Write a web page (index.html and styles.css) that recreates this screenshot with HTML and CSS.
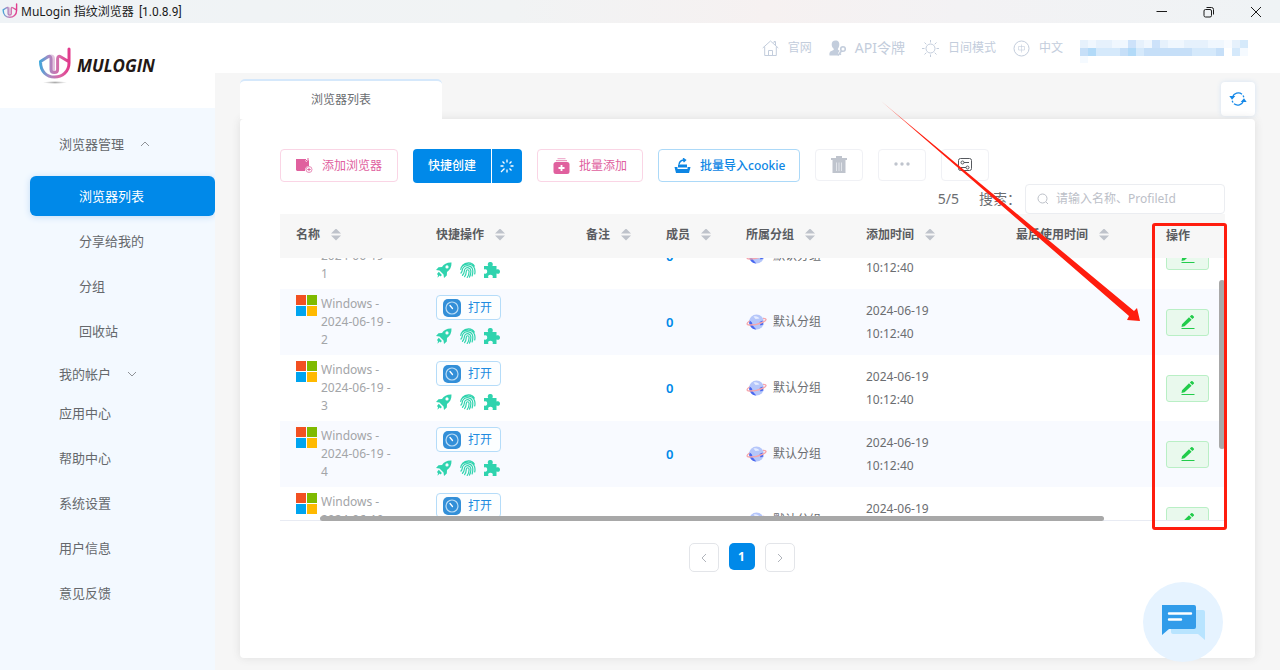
FILE: index.html
```html
<!DOCTYPE html>
<html lang="zh-CN">
<head>
<meta charset="utf-8">
<title>MuLogin 指纹浏览器</title>
<link rel="stylesheet" href="styles.css">
</head>
<body>
<svg class="defs" aria-hidden="true">
  <defs>
    <linearGradient id="brand" gradientUnits="userSpaceOnUse" x1="1" x2="32" y1="0" y2="0"><stop offset="0" stop-color="#35a8dc"/><stop offset=".3" stop-color="#a58cc4"/><stop offset=".65" stop-color="#d96aa8"/><stop offset="1" stop-color="#e2368a"/></linearGradient>
    <symbol id="mark" viewBox="0 0 34 38">
      <g fill="none" stroke="url(#brand)" stroke-linecap="round" stroke-linejoin="round">
        <path stroke-width="3" d="M31 2V16C31 25 24 30 16.500 30S2.500 25 2.500 14.500L9.500 10Q13 8 13 12V22.500Q13 25.500 16.300 25.500T19.600 22.500V12Q19.600 8 23 10L30.500 14.500"/>
        <path stroke-width="3" opacity=".45" d="M9.500 10Q15.500 7.500 15.500 12V23"/>
      </g>
    </symbol>
    <symbol id="windows" viewBox="0 0 20 20"><path fill="#f25022" d="M0 0h9.500v9.500H0z"/><path fill="#7fba00" d="M10.500 0H20v9.500h-9.500z"/><path fill="#00a4ef" d="M0 10.500h9.500V20H0z"/><path fill="#ffb900" d="M10.500 10.500H20V20h-9.500z"/></symbol>
    <symbol id="browser" viewBox="0 0 18 18"><rect width="18" height="18" rx="5" fill="#338fd8"/><circle cx="9" cy="9" r="6" fill="none" stroke="#b9dcf5" stroke-width="1.200"/><path d="M7 6.500l2.500 3" stroke="#fff" stroke-width="1.300" stroke-linecap="round"/></symbol>
    <symbol id="rocket" viewBox="0 0 16 16"><path fill="#2fd3ae" d="M15.500.5C11 .3 8 2 6 5L2.500 5.200 0 8l3.500.5L7.500 12.500 8 16l2.800-2.500L11 10C14 8 15.700 5 15.500.5zM11 6.500A1.600 1.600 0 1 1 11 3.300 1.600 1.600 0 0 1 11 6.500z"/><path fill="#2fd3ae" d="M2.800 9.800L5.900 12.900 4.600 14.500 3.700 13.600 1.500 15.700 2 13.200 1 12z"/></symbol>
    <symbol id="finger" viewBox="0 0 16 16"><g fill="none" stroke="#2fd3ae" stroke-width="1.200" stroke-linecap="round"><path d="M2.500 3.500C6-.5 12 0 14.300 4M.7 7.500C1.500 1.500 12-.5 14.500 6.500c.6 2 .6 4 .2 5.500M1 11c1.600-1.500 1-3.500 2-5 2.500-4 9-2.500 9.700 2 .3 2 0 4-.6 6M2.500 13.300C5 11 3.800 8.500 5 7c2-2.500 5.500-1 5.800 1.600.3 2.500-.4 4.700-1.300 6.500M4.600 14.600C6.300 13 6.200 10.500 6.300 9c.2-1.700 2.500-1.600 2.700 0 .2 2.500-.6 5-1.800 6.500"/></g></symbol>
    <symbol id="puzzle" viewBox="0 0 16 16"><path fill="#2fd3ae" d="M0 4h4.200C3 1.500 4.500 0 6.300 0s3.300 1.500 2.100 4H12.500v3.600C14.500 6.500 16 7.600 16 9.500s-1.500 3-3.500 1.900V16H8.600c.8-2.200-.4-3.300-2.200-3.300S3.600 13.800 4.400 16H0v-4.600c2.200.8 3.200-.2 3.200-1.900S2.200 6.800 0 7.600z"/></symbol>
    <symbol id="planet" viewBox="0 0 20 16"><circle cx="10" cy="8" r="7.500" fill="#b5c6fa"/><path d="M2.800 6.500c2 .5 3.500 2.500 3 4.500l4 4.400C5 15.600 2 11 2.800 6.500zM13 8l3-1.500.8 4-2.800 1z" fill="#4968f0"/><path d="M7 2.500c3-1 5 .5 6 2L9 5z" fill="#e7edff"/><path d="M3 7C0 9-.5 11 3 11c5 0 10-1.200 14-3.200 3.500-1.800 3.500-3.500-.5-3.300" fill="none" stroke="#f6a5ac" stroke-width="1.300"/></symbol>
    <symbol id="pen" viewBox="0 0 14 14"><path fill="#22cc4b" d="M1 9.200L8 2.200l2.600 2.600-7 6.400L.5 12zM8.800 1.500L10.200.2q.7-.5 1.300 0l1.300 1.300q.5.700 0 1.300L11.300 4z"/><path fill="#22cc4b" d="M.5 13h13v1H.5z"/></symbol>
  </defs>
</svg>

<header class="titlebar">
  <svg class="titlebar-mark"><use href="#mark"/></svg>
  <span class="titlebar-text">MuLogin 指纹浏览器</span><span class="version">[1.0.8.9]</span>
  <div class="window-buttons">
    <button aria-label="最小化"><svg viewBox="0 0 12 12"><path d="M.5 5.500h10.500"/></svg></button>
    <button aria-label="还原"><svg viewBox="0 0 12 12"><rect x="1" y="3.500" width="7.500" height="7.500" rx="1.500"/><path d="M3.500 1.500H8.500Q10.500 1.500 10.500 3.500V8.500"/></svg></button>
    <button aria-label="关闭"><svg viewBox="0 0 12 12"><path d="M1 1l10 10M11 1L1 11"/></svg></button>
  </div>
</header>

<div class="app">
  <aside class="sidebar">
    <div class="logo"><div class="logo-mark"><svg><use href="#mark"/></svg></div><span class="logo-text">MULOGIN</span></div>
    <nav class="menu">
      <button class="menu-title">浏览器管理<svg viewBox="0 0 10 6"><path d="M1 5l4-4 4 4"/></svg></button>
      <a class="menu-sub active" href="#list">浏览器列表</a>
      <a class="menu-sub" href="#share">分享给我的</a>
      <a class="menu-sub" href="#group">分组</a>
      <a class="menu-sub" href="#trash">回收站</a>
      <button class="menu-title compact">我的帐户<svg viewBox="0 0 10 6"><path d="M1 1l4 4 4-4"/></svg></button>
      <a class="menu-item" href="#apps">应用中心</a>
      <a class="menu-item" href="#help">帮助中心</a>
      <a class="menu-item" href="#settings">系统设置</a>
      <a class="menu-item" href="#user">用户信息</a>
      <a class="menu-item" href="#feedback">意见反馈</a>
    </nav>
  </aside>

  <div class="content">
    <nav class="topnav">
      <a href="#site"><svg viewBox="0 0 17 17"><path d="M.7 8L8.500 1l7.800 7M2.700 6.500V15.500H14.300V6.500M6.500 15.500V10.500h4v5M12 3V1.500h1.500V5"/></svg>官网</a>
      <a href="#api" class="api"><svg viewBox="0 0 17 17"><path class="solid" d="M6.500.5C9.500.5 10.500 2.500 10.300 5c-.2 2-1 3-1.500 4 .2 1 1 1.300 2 1.700C9 12.500 8.500 14 9.300 15.500H.5C0 11.500 1.500 11.500 4.500 10c.5-.5.300-1 0-1.500C3.500 7.500 2.700 6.500 2.700 4.500 2.700 2 4 .5 6.500.5z"/><circle cx="14" cy="9" r="2.300" stroke-width="1.600"/><path d="M12.500 11l-3.500 4.500M10.500 13.500l1.500 1.200" stroke-width="1.600"/></svg>API令牌</a>
      <a href="#mode"><svg viewBox="0 0 17 17"><circle cx="8.500" cy="8.500" r="4.500"/><path d="M8.500 0v2.500M8.500 14.500V17M0 8.500h2.500M14.500 8.500H17M2.500 2.500l1.800 1.800M12.700 12.700l1.800 1.800M2.500 14.500l1.800-1.800M12.700 4.300l1.800-1.800"/></svg>日间模式</a>
      <a href="#lang"><svg viewBox="0 0 17 17"><circle cx="8.500" cy="8.500" r="7.500"/><path d="M5.500 6.500h6v3.500h-6zM8.500 4.500v8" opacity=".6"/></svg>中文</a>
      <svg class="account" viewBox="0 0 168 24" role="img" aria-label="帐户">
        <path fill="#e6f1fc" d="M0 1h168v8H0z"/><path fill="#f0f7fe" d="M8 1h8v8H8zM32 1h16v8H32zM64 1h8v8h-8zM88 1h16v8H88zM128 1h16v8h-16z"/>
        <path fill="#cde2fa" d="M48 1h8v8h-8zM72 1h8v8h-8z"/><path fill="#f8fbff" d="M144 1h8v8h-8z"/><path fill="#d6eafb" d="M160 1h8v8h-8z"/>
        <path fill="#c6dff8" d="M0 9h144v8H0z"/><path fill="#b2daf8" d="M8 9h8v8H8zM48 9h8v8h-8z"/><path fill="#d5e9fb" d="M16 9h24v8H16zM56 9h8v8h-8zM112 9h24v8h-24z"/><path fill="#d5e9fb" d="M152 9h8v8h-8z"/><path fill="#f5faff" d="M160 9h8v8h-8zM0 17h8v7H0z"/>
      </svg>
    </nav>

    <main class="main">
      <div class="tabs">
        <button class="tab">浏览器列表</button>
        <button class="refresh" aria-label="刷新"><svg viewBox="0 0 18 16"><path d="M3.500 6A6.200 6.200 0 0 1 13 3.200M14.500 10A6.200 6.200 0 0 1 5 12.800"/><path d="M14 4.500l1.200 2.500M4 11.500L2.800 9" stroke-dasharray="2 1"/><path class="solid" d="M.3 5h6L3 8.800zM17.700 11h-6L15 7.200z"/></svg></button>
      </div>
      <section class="panel">
        <div class="toolbar">
          <button class="btn pink"><svg viewBox="0 0 17 16"><path class="solid" d="M0 1h9l1 3 3-2v6q-4 0-4 5H1L0 12z"/><path d="M9 1l3 3V0" stroke-width="1"/><circle cx="13" cy="11.500" r="3" stroke-width=".7"/><path d="M13 9.800v3.400M11.300 11.500h3.400" stroke-width="1"/></svg>添加浏览器</button>
          <div class="split"><button>快捷创建</button><button aria-label="批量生成"><svg viewBox="0 0 14 14"><path d="M7 .5v3M7 10.500v3M.5 7h3M10.500 7h3M2.500 2.500l2 2M9.500 9.500l2 2M9.500 4.500l2-2M1 13l3.500-3.500"/></svg></button></div>
          <button class="btn pink"><svg viewBox="0 0 16 16"><path d="M4 .700h8" opacity=".6"/><path d="M2.500 2.700h11" opacity=".8"/><rect class="solid" y="4" width="16" height="12" rx="2.500"/><path d="M8 7v6M5 10h6" stroke="#fff" stroke-width="1.800"/></svg>批量添加</button>
          <button class="btn blue"><svg viewBox="0 0 16 16"><path class="solid" d="M0 9h3v2h10V9h3l-1.500 6h-13zM3.500 6.500h9v3h-9z"/><path d="M4.500 6.500c.5-3.500 2.500-4.500 5.500-4.500M8.500.300L11 2 9 4" stroke-width="1.400"/></svg>批量导入cookie</button>
          <button class="btn icon" aria-label="删除"><svg viewBox="0 0 16 18"><path class="solid" d="M5 0h6v2h5v2H0V2h5zM1.500 4h13v13h-13z"/><path d="M5.500 6.500V15M8 6.500V15M10.500 6.500V15" stroke="#e2e5ea" stroke-width="1"/></svg></button>
          <button class="btn icon" aria-label="更多"><svg viewBox="0 0 18 18"><g class="solid"><circle cx="3" cy="8" r="1.700"/><circle cx="9" cy="8" r="1.700"/><circle cx="15" cy="8" r="1.700"/></g></svg></button>
          <button class="btn icon dark" aria-label="列设置"><svg viewBox="0 0 16 16"><rect x="1.500" y="1.500" width="13" height="12" rx="2"/><circle cx="5.500" cy="5.500" r="1.500"/><path d="M7 5.500h5M4 10.500h5"/><circle cx="10.500" cy="10.500" r="1.500"/></svg></button>
        </div>
        <div class="search-row">
          <span>5/5</span>
          <label for="search">搜索：</label>
          <div class="search-box"><svg viewBox="0 0 12 12"><circle cx="5.500" cy="5.500" r="4.500"/><path d="M9 9l2 2"/></svg><input id="search" type="search" placeholder="请输入名称、ProfileId"></div>
        </div>

        <div class="grid">
          <table class="head">
            <colgroup><col class="c-name"><col class="c-quick"><col class="c-note"><col class="c-note"><col class="c-group"><col class="c-time"><col><col class="c-act"></colgroup>
            <thead><tr><th>名称<i></i></th><th>快捷操作<i></i></th><th>备注<i></i></th><th>成员<i></i></th><th>所属分组<i></i></th><th>添加时间<i></i></th><th>最后使用时间<i></i></th><th class="act-head">操作</th></tr></thead>
          </table>
          <div class="body">
            <table class="rows">
              <colgroup><col class="c-name"><col class="c-quick"><col class="c-note"><col class="c-note"><col class="c-group"><col class="c-time"><col><col class="c-act"></colgroup>
              <tbody id="rows"></tbody>
            </table>
          </div>
          <div class="thumb-x"></div>
          <div class="thumb-y"></div>
          <div class="marker"></div>
          <svg class="arrow" viewBox="0 0 260 222"><defs><linearGradient id="fade" x1="0" y1="0" x2="1" y2="1"><stop offset="0" stop-color="#ff1d0e" stop-opacity=".4"/><stop offset=".15" stop-color="#ff1d0e"/></linearGradient></defs><path fill="url(#fade)" d="M0 0L253 210 256 207 259 220 246 219 248 215z"/></svg>
        </div>

        <nav class="pager" aria-label="分页">
          <button aria-label="上一页"><svg viewBox="0 0 6 10"><path d="M5 1L1 5l4 4"/></svg></button>
          <button class="current">1</button>
          <button aria-label="下一页"><svg viewBox="0 0 6 10"><path d="M1 1l4 4-4 4"/></svg></button>
        </nav>
      </section>
    </main>
  </div>
</div>
<button class="chat" aria-label="在线客服"><svg viewBox="0 0 44 36"><path fill="#b8e4ff" d="M10 6h32q2 0 2 2v28l-7-6H12q-2 0-2-2z"/><path fill="#319cea" d="M1 1h32q2 0 2 2v20q0 2-2 2H8L1 31z"/><path d="M8 9.500h22M8 15.500h12" stroke="#fff" stroke-width="2.400" stroke-linecap="round"/></svg></button>
<script src="rows.js"></script>
</body>
</html>
```

FILE: rows.js
```js
document.getElementById("rows").innerHTML = [1, 2, 3, 4, 5].map(n => `
  <tr>
    <td><div class="name"><svg><use href="#windows"/></svg><span>Windows - 2024-06-19 - ${n}</span></div></td>
    <td><div class="quick"><button class="open"><svg><use href="#browser"/></svg>打开</button>
      <div class="tools"><button aria-label="启动"><svg><use href="#rocket"/></svg></button><button aria-label="指纹"><svg><use href="#finger"/></svg></button><button aria-label="扩展"><svg><use href="#puzzle"/></svg></button></div></div></td>
    <td></td>
    <td><a class="members" href="#members">0</a></td>
    <td><div class="group"><svg><use href="#planet"/></svg>默认分组</div></td>
    <td><div class="time">2024-06-19<br>10:12:40</div></td>
    <td></td>
    <td><button class="edit" aria-label="编辑"><svg><use href="#pen"/></svg></button></td>
  </tr>`).join("");
```

FILE: styles.css
```css
* { box-sizing: border-box; }
body {
  margin: 0;
  height: 100vh;
  display: flex;
  flex-direction: column;
  overflow: hidden;
  background: #fff;
  color: #6b6d71;
  font: 12px/18px "Noto Sans", "Noto Sans CJK SC", sans-serif;
}
button { padding: 0; border: 0; background: none; color: inherit; font: inherit; cursor: pointer; }
a { color: inherit; text-decoration: none; }
svg { display: block; flex: none; fill: none; stroke: currentColor; }
symbol, use, .logo svg, .titlebar-mark { stroke: none; }
.solid { fill: currentColor; stroke: none; }
.defs { position: absolute; width: 0; height: 0; }

.titlebar {
  height: 23px;
  flex: none;
  display: flex;
  align-items: center;
  padding: 0 1px 0 2px;
  background: linear-gradient(90deg, #eff3f6 0%, #f1f3f4 40%, #f6f1f1 60%, #f3f2f4 75%, #eff3f5 100%);
  color: #1b1b1b;
}
.titlebar-mark { width: 16px; height: 18px; margin-right: 3px; }
.version { margin-left: 5px; font-family: Roboto, sans-serif; }
.window-buttons { margin-left: auto; display: flex; }
.window-buttons button { width: 47px; height: 23px; display: grid; place-items: center; }
.window-buttons svg { width: 12px; height: 12px; }

.app { flex: 1; min-height: 0; display: flex; }
.sidebar { width: 215px; flex: none; display: flex; flex-direction: column; }
.logo { height: 85px; display: flex; align-items: center; gap: 5px; padding-left: 38px; }
.logo-mark { display: flex; flex-direction: column; align-items: center; }
.logo-mark svg { width: 34px; height: 38px; }
.logo-mark::after { content: ""; width: 24px; height: 3px; margin-top: -4px; border-radius: 50%; background: radial-gradient(closest-side, #aaa, #fff); }
.logo-text { color: #231815; font: italic 700 17px/20px "Open Sans", sans-serif; }
.menu { flex: 1; display: flex; flex-direction: column; padding: 14px 0 0 30px; background: #f3f9ff; font-size: 13px; color: #65686c; }
.menu-title { height: 44px; display: flex; align-items: center; gap: 16px; padding-left: 29px; margin-bottom: 10px; }
.menu-title.compact { height: 32px; margin: 5px 0 0; }
.menu-title svg { width: 10px; height: 6px; stroke: #8f9398; }
.menu-sub, .menu-item { height: 45px; display: flex; align-items: center; padding-left: 49px; }
.menu-item { padding-left: 29px; }
.menu-sub.active { height: 40px; margin-bottom: 2px; border-radius: 6px; background: #0089e9; color: #fff; box-shadow: 0 1px 7px #c2dcf5; }

.content { flex: 1; min-width: 0; display: flex; flex-direction: column; }
.topnav { height: 50px; flex: none; display: flex; align-items: center; justify-content: flex-end; gap: 17px; padding-right: 32px; color: #c3cddc; }
.topnav a { display: flex; align-items: center; gap: 9px; }
.topnav a svg { width: 17px; height: 17px; }
.topnav .api { font-size: 14px; }
.account { width: 168px; height: 24px; margin-top: 6px; stroke: none; }

.main { flex: 1; min-height: 0; display: flex; flex-direction: column; padding: 6px 25px 12px; background: #f6f6f6; }
.tabs { display: flex; justify-content: space-between; align-items: flex-start; height: 40px; flex: none; }
.tab { width: 202px; height: 40px; position: relative; z-index: 1; border-top: 2px solid #d5e8fb; border-radius: 5px 5px 0 0; background: #fff; }
.refresh { width: 34px; height: 34px; margin-top: 3px; display: grid; place-items: center; border-radius: 4px; background: #fff; color: #1488e8; box-shadow: 0 0 5px #d5e3f2; }
.refresh svg { width: 18px; height: 16px; stroke-width: 1.3; }
.panel { flex: 1; padding: 30px 30px 0 40px; border-radius: 4px; background: #fff; box-shadow: 0 0 8px #dedede; }

.toolbar { display: flex; gap: 15px; height: 34px; align-items: flex-start; }
.btn { height: 33px; display: flex; align-items: center; gap: 9px; padding: 0 15px; border: 1px solid; border-radius: 4px; }
.btn svg { width: 17px; height: 16px; }
.btn.pink { border-color: #fad5e5; color: #e0609e; }
.btn.blue { padding-right: 14px; border-color: #acd9f8; color: #0d86e4; font-weight: 500; }
.btn.icon { width: 48px; height: 32px; padding: 0; justify-content: center; border-color: #f0f1f5; color: #bfc4cd; }
.btn.icon svg { width: 18px; height: 18px; }
.btn.icon.dark { color: #56595e; }
.btn.icon.dark svg { width: 16px; height: 16px; }
.split { display: flex; gap: 1px; height: 34px; color: #fff; font-weight: 500; }
.split button { width: 78px; background: #0089e9; border-radius: 4px 0 0 4px; }
.split button + button { width: 30px; display: grid; place-items: center; border-radius: 0 4px 4px 0; }
.split svg { width: 14px; height: 14px; stroke-width: 1.3; }

.search-row { height: 31px; display: flex; align-items: center; justify-content: flex-end; font-size: 14px; }
.search-row label { margin: 0 4px 0 20px; }
.search-box { width: 200px; height: 30px; display: flex; align-items: center; gap: 7px; padding: 0 11px; border: 1px solid #ebedf1; border-radius: 4px; color: #bcc0c8; }
.search-box svg { width: 12px; height: 12px; }
.search-box input { flex: 1; min-width: 0; padding: 0; border: 0; outline: 0; background: none; color: #606266; font: 12px/18px "Noto Sans", "Noto Sans CJK SC", sans-serif; }
.search-box input::placeholder { color: #bcc0c8; }

.grid { position: relative; border-bottom: 1px solid #e8ebf3; }
table { width: 100%; table-layout: fixed; border-collapse: collapse; }
.c-name { width: 140px; }
.c-quick, .c-time { width: 150px; }
.c-note { width: 80px; }
.c-group { width: 120px; }
.c-act { width: 75px; }
th { height: 44px; padding: 0 0 3px 16px; background: #f7f7f7; color: #5a5c60; text-align: left; font-weight: 700; white-space: nowrap; }
th.act-head { padding-bottom: 0; }
th i { display: inline-block; width: 10px; height: 12px; margin-left: 11px; vertical-align: -2px; background: #bfc3cb; clip-path: polygon(50% 0, 100% 5px, 0 5px, 50% 0, 50% 12px, 0 7px, 100% 7px, 50% 12px); }
.body { height: 262px; overflow: hidden; }
.rows { margin-top: -35px; }
.rows tr:nth-child(even) { background: #f8faff; }
td { height: 66px; padding: 0 0 0 16px; }
.name { display: flex; gap: 4px; width: 100px; color: #a3a5a8; }
.name svg { width: 21px; height: 21px; }
.quick { display: flex; flex-direction: column; align-items: flex-start; gap: 8px; padding-bottom: 5px; }
.open { height: 25px; width: 65px; display: flex; align-items: center; gap: 7px; padding-left: 6px; border: 1px solid #b5dcf9; border-radius: 4px; background: #fcfeff; color: #218be0; }
.open svg { width: 18px; height: 18px; }
.tools { display: flex; gap: 8px; }
.tools svg { width: 16px; height: 16px; }
.members { color: #0089e9; font-size: 13px; font-weight: 600; }
.group { display: flex; align-items: center; gap: 6px; }
.group svg { width: 21px; height: 16px; }
.time { line-height: 23px; }
.edit { width: 43px; height: 27px; display: grid; place-items: center; border: 1px solid #b9efc5; border-radius: 3px; background: #e9f9ed; }
.edit svg { width: 14px; height: 14px; }
.thumb-x { position: absolute; left: 40px; right: 121px; bottom: -1px; height: 5px; border-radius: 3px; background: #a8a8a8; }
.thumb-y { position: absolute; right: 0; top: 66px; width: 6px; height: 169px; border-radius: 3px; background: #a8a8a8; }
.marker { position: absolute; right: -2px; top: 9px; width: 75px; height: 307px; border: 3px solid #ff1d0e; border-radius: 3px; }
.arrow { position: absolute; right: 84px; top: -113px; width: 260px; height: 222px; stroke: none; pointer-events: none; }

.pager { display: flex; justify-content: center; gap: 10px; padding: 22px 22px 0 0; }
.pager button { width: 30px; height: 29px; display: grid; place-items: center; border: 1px solid #e3e5e9; border-radius: 5px; color: #b0b4bb; }
.pager svg { width: 6px; height: 10px; }
.pager .current { width: 26px; height: 27px; border: 0; background: #0089e9; color: #fff; font-weight: 700; }
.chat { position: fixed; right: 57px; bottom: 8px; width: 80px; height: 80px; display: grid; place-items: center; border-radius: 50%; background: #e6f3ff; }
.chat svg { width: 44px; height: 36px; stroke: none; }
```
